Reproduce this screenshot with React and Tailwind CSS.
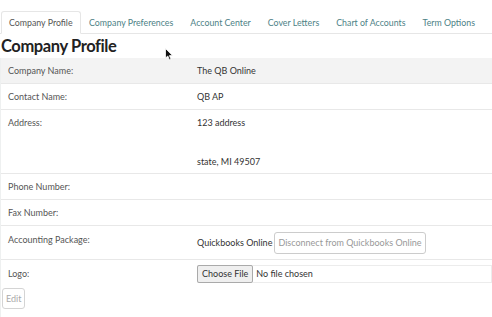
const tabs = [
  'Company Profile',
  'Company Preferences',
  'Account Center',
  'Cover Letters',
  'Chart of Accounts',
  'Term Options',
];

function Row({ label, children, className = '' }) {
  return (
    <div className={`flex border-b border-[#e8e8e8] ${className}`}>
      <div className="w-[196px] shrink-0 pl-[7px] text-[#555]">{label}</div>
      <div className="flex-1 text-[#333]">{children}</div>
    </div>
  );
}

export default function App() {
  return (
    <div
      className="relative h-[317px] w-[492px] overflow-hidden whitespace-nowrap bg-white text-[9px] leading-[12px]"
      style={{ fontFamily: 'Lato, "Open Sans", sans-serif' }}
    >
      {/* tabs */}
      <div className="mt-[11px] flex h-[23px] items-stretch border-b border-[#e6e6e6] pl-[1px] text-[8.8px]">
        {tabs.map((t, i) => (
          <div
            key={t}
            className={
              i === 0
                ? 'relative -mb-px flex items-center rounded-t-[3px] border border-b-white border-[#e6e6e6] bg-white px-[7px] pt-[1px] text-[#555]'
                : 'flex items-center px-[8.5px] pt-[1px] text-[#4d7f86]'
            }
          >
            {t}
          </div>
        ))}
      </div>

      <h1 className="ml-[1px] mt-[2px] text-[16.5px] font-bold leading-[20px] tracking-[-0.4px] text-[#222]">
        Company Profile
      </h1>

      <div className="mt-[2px] border-l border-[#eef0f0]">
        <Row label="Company Name:" className="h-[26px] items-center bg-[#f3f3f3]">
          The QB Online
        </Row>
        <Row label="Contact Name:" className="h-[26px] items-center">
          QB AP
        </Row>
        <Row label="Address:" className="h-[64px] pt-[7px]">
          <div>123 address</div>
          <div className="mt-[27px]">state, MI 49507</div>
        </Row>
        <Row label="Phone Number:" className="h-[26px] items-center" />
        <Row label="Fax Number:" className="h-[26px] items-center" />
        <Row label="Accounting Package:" className="h-[34px] pt-[8px]">
          <div className="-mt-[2px] flex items-center gap-[2px]">
            <span>Quickbooks Online</span>
            <span className="rounded-[3px] border border-[#ccc] px-[3px] py-[4px] text-[#999]">
              Disconnect from Quickbooks Online
            </span>
          </div>
        </Row>
        <div className="flex">
          <div className="w-[196px] shrink-0 pl-[7px] pt-[8px] text-[#555]">Logo:</div>
          <div className="mt-[5px] flex h-[18px] flex-1 items-center border border-l-0 border-[#ececec] text-[#333]">
            <span className="flex h-[18px] items-center rounded-[2px] border border-[#aaa] bg-[#efefef] px-[4px]">
              Choose File
            </span>
            <span className="ml-[3px]">No file chosen</span>
          </div>
        </div>
        <div className="border-b border-[#e8e8e8] pb-[8px] pt-[5px]">
          <span className="ml-[1px] inline-flex h-[21px] items-center rounded-[3px] border border-[#d4d4d4] px-[3px] text-[#aaa]">
            Edit
          </span>
        </div>
      </div>

      {/* mouse pointer */}
      <svg
        className="absolute left-[165px] top-[48px]"
        width="9"
        height="13"
        viewBox="0 0 9 13"
      >
        <path
          d="M0.5 0.5 L0.5 10 L2.8 8 L4.5 12 L6 11.3 L4.4 7.6 L7.5 7.6 Z"
          fill="#111"
          stroke="#fff"
          strokeWidth="0.8"
        />
      </svg>
    </div>
  );
}
